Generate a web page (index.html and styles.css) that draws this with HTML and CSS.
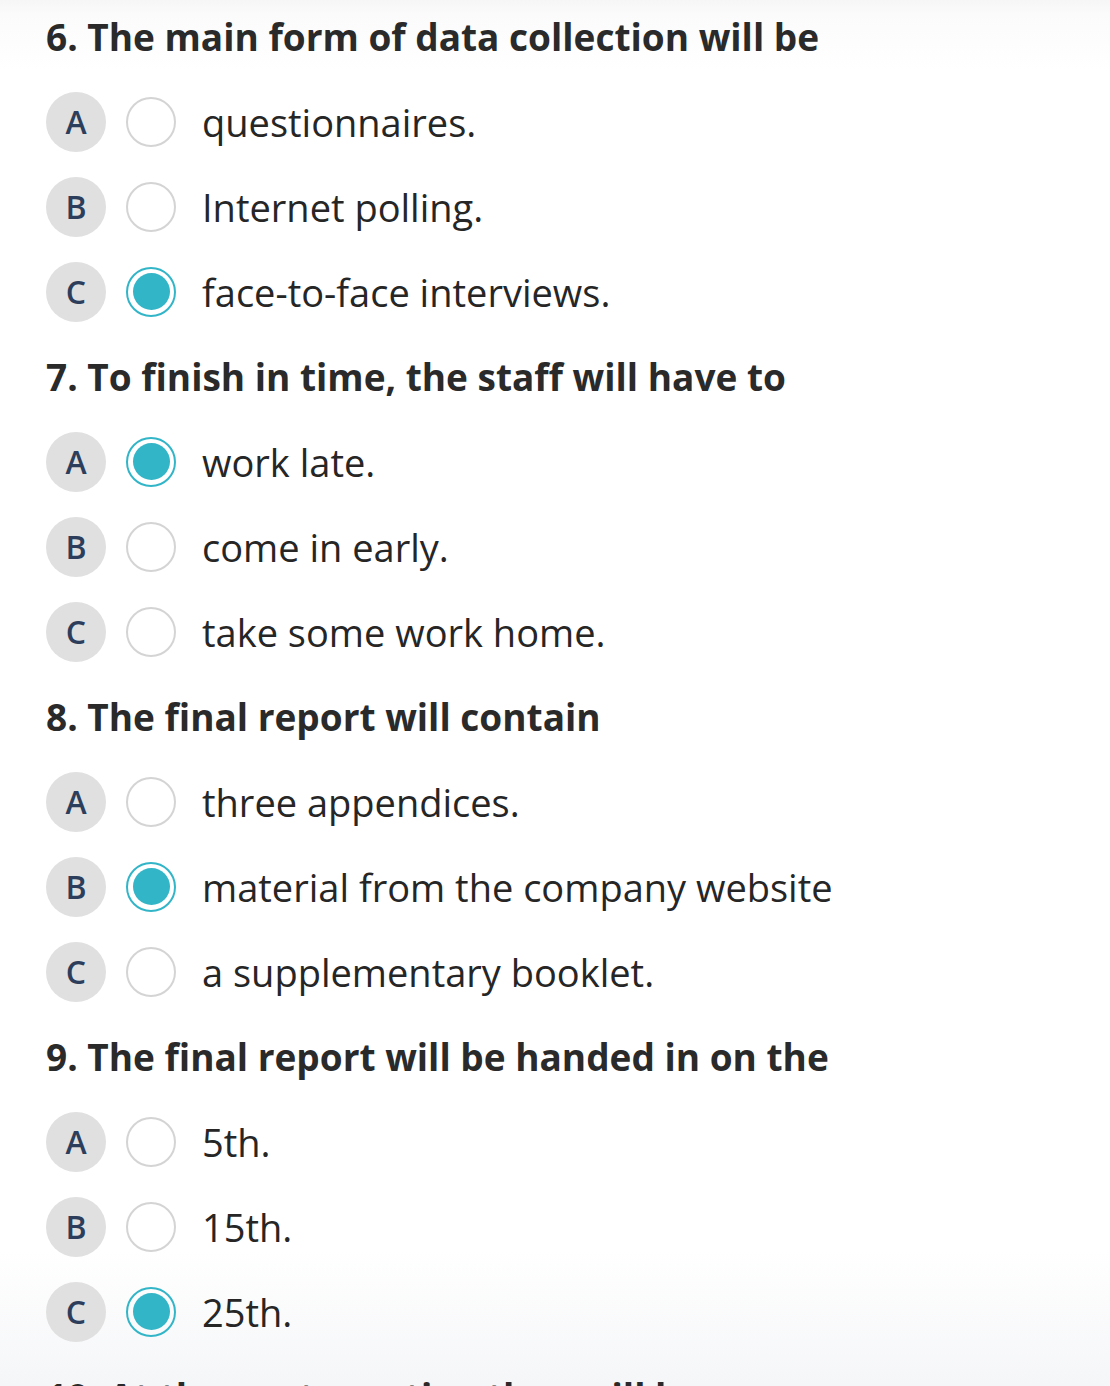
FILE: index.html
```html
<!DOCTYPE html>
<html>
<head>
<meta charset="utf-8">
<link rel="stylesheet" href="styles.css">
</head>
<body>
<div class="quiz">
  <section class="question">
    <h2 class="title">6. The main form of data collection will be</h2>
    <div class="option"><span class="letter">A</span><span class="radio"></span><span class="text">questionnaires.</span></div>
    <div class="option"><span class="letter">B</span><span class="radio"></span><span class="text">Internet polling.</span></div>
    <div class="option"><span class="letter">C</span><span class="radio checked"></span><span class="text">face-to-face interviews.</span></div>
  </section>
  <section class="question">
    <h2 class="title">7. To finish in time, the staff will have to</h2>
    <div class="option"><span class="letter">A</span><span class="radio checked"></span><span class="text">work late.</span></div>
    <div class="option"><span class="letter">B</span><span class="radio"></span><span class="text">come in early.</span></div>
    <div class="option"><span class="letter">C</span><span class="radio"></span><span class="text">take some work home.</span></div>
  </section>
  <section class="question">
    <h2 class="title">8. The final report will contain</h2>
    <div class="option"><span class="letter">A</span><span class="radio"></span><span class="text">three appendices.</span></div>
    <div class="option"><span class="letter">B</span><span class="radio checked"></span><span class="text">material from the company website</span></div>
    <div class="option"><span class="letter">C</span><span class="radio"></span><span class="text">a supplementary booklet.</span></div>
  </section>
  <section class="question">
    <h2 class="title">9. The final report will be handed in on the</h2>
    <div class="option"><span class="letter">A</span><span class="radio"></span><span class="text">5th.</span></div>
    <div class="option"><span class="letter">B</span><span class="radio"></span><span class="text">15th.</span></div>
    <div class="option"><span class="letter">C</span><span class="radio checked"></span><span class="text">25th.</span></div>
  </section>
  <section class="question">
    <h2 class="title">10. At the next meeting they will be</h2>
  </section>
</div>
</body>
</html>
```
FILE: styles.css
```css
html, body {
  margin: 0;
  padding: 0;
  overflow: hidden;
}
html {
  background: #ffffff;
}
body {
  height: 1386px;
  font-family: "Open Sans", "Noto Sans", sans-serif;
  color: #262626;
  background:
    linear-gradient(to bottom, #f6f6f6 0px, #fbfbfb 14px, #ffffff 70px, #ffffff 1250px, #f5f6f8 1386px);
}
.quiz {
  padding: 0 0 0 46px;
  margin-top: -6px;
  display: flex;
  flex-direction: column;
}
.question {
  display: flex;
  flex-direction: column;
}
.title {
  margin: 0;
  height: 85px;
  display: flex;
  align-items: center;
  font-size: 37px;
  font-weight: 700;
  color: #2a2a2a;
  white-space: nowrap;
}
.option {
  height: 85px;
  display: flex;
  align-items: center;
}
.letter {
  width: 60px;
  height: 60px;
  border-radius: 50%;
  background: #e0e0e0;
  color: #2c3e5c;
  font-size: 32px;
  font-weight: 600;
  display: flex;
  align-items: center;
  justify-content: center;
  flex: none;
}
.radio {
  margin-left: 20px;
  width: 50px;
  height: 50px;
  box-sizing: border-box;
  border-radius: 50%;
  border: 2px solid #d4d4d4;
  flex: none;
  display: flex;
  align-items: center;
  justify-content: center;
}
.radio.checked {
  border-color: #33b5c8;
}
.radio.checked::after {
  content: "";
  width: 37px;
  height: 37px;
  border-radius: 50%;
  background: #33b5c8;
}
.text {
  margin-left: 26px;
  font-size: 38px;
  color: #262626;
  white-space: nowrap;
}
```
